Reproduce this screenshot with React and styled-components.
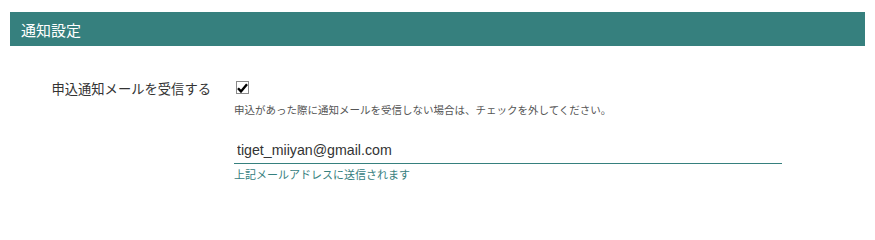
import React, { useState } from "react";
import styled, { createGlobalStyle } from "styled-components";

const colors = {
  teal: "#36807e",
  text: "#333333",
  sub: "#555555",
};

const GlobalStyle = createGlobalStyle`
  body {
    margin: 0;
    background: #fff;
    font-family: "Noto Sans CJK JP", "Noto Sans", sans-serif;
    color: ${colors.text};
  }
`;

const App = () => {
  const [notify, setNotify] = useState(true);

  return (
    <Page>
      <GlobalStyle />
      <Section>
        <Heading>通知設定</Heading>
        <Form>
          <Label htmlFor="notify">申込通知メールを受信する</Label>
          <Field>
            <CheckRow>
              <Checkbox
                id="notify"
                checked={notify}
                onClick={() => setNotify(!notify)}
              >
                {notify && (
                  <svg width="11" height="10" viewBox="0 0 11 10">
                    <path
                      d="M1 5.2 L4 8.4 L10 1.2"
                      fill="none"
                      stroke="#000"
                      strokeWidth="2.4"
                    />
                  </svg>
                )}
              </Checkbox>
            </CheckRow>
            <Help>
              申込があった際に通知メールを受信しない場合は、チェックを外してください。
            </Help>
            <EmailInput defaultValue="tiget_miiyan@gmail.com" />
            <Hint>上記メールアドレスに送信されます</Hint>
          </Field>
        </Form>
      </Section>
    </Page>
  );
};

export default App;

const Page = styled.div`
  padding: 12px 10px;
`;

const Section = styled.section`
  display: flex;
  flex-direction: column;
`;

const Heading = styled.h2`
  margin: 0;
  height: 34px;
  padding-left: 11px;
  display: flex;
  align-items: center;
  background: ${colors.teal};
  color: #fff;
  font-size: 15px;
  font-weight: 400;
`;

const Form = styled.div`
  display: grid;
  grid-template-columns: 224px 548px;
  padding-top: 35px;
`;

const Label = styled.label`
  text-align: right;
  padding-right: 23px;
  font-size: 13.3px;
  line-height: 16px;
  color: ${colors.text};
`;

const Field = styled.div`
  display: flex;
  flex-direction: column;
`;

const CheckRow = styled.div`
  display: flex;
  padding-left: 2px;
`;

const Checkbox = styled.span`
  width: 13px;
  height: 13px;
  box-sizing: border-box;
  border: 1px solid #8a8a8a;
  background: #fff;
  display: flex;
  align-items: center;
  justify-content: center;
  cursor: pointer;
`;

const Help = styled.p`
  margin: 9px 0 0;
  font-size: 10.5px;
  line-height: 14px;
  color: ${colors.sub};
  white-space: nowrap;
`;

const EmailInput = styled.input`
  margin-top: 24px;
  border: none;
  border-bottom: 1px solid ${colors.teal};
  outline: none;
  padding: 0 0 4px 3px;
  font-family: "Liberation Sans", Arial, sans-serif;
  font-size: 14.2px;
  line-height: 18px;
  color: ${colors.text};
  background: transparent;
`;

const Hint = styled.p`
  margin: 3px 0 0;
  font-size: 11px;
  line-height: 14px;
  color: ${colors.teal};
`;
